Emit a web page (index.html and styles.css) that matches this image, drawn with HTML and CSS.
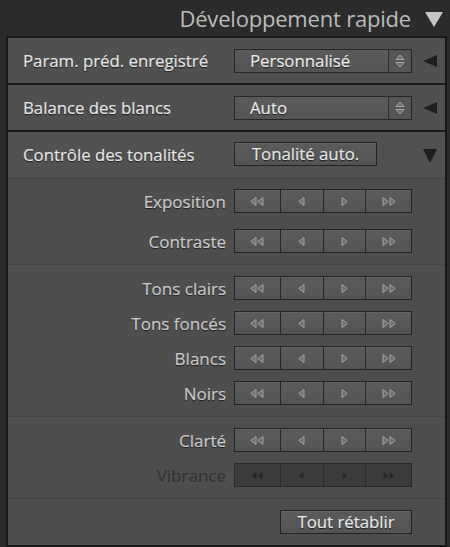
FILE: index.html
```html
<!DOCTYPE html>
<html lang="fr">
<head>
<meta charset="utf-8">
<title>Développement rapide</title>
<link rel="stylesheet" href="styles.css">
</head>
<body>
<div class="app">
  <div class="title-bar">
    <span class="title">Développement rapide</span>
    <svg class="title-tri" width="18" height="15" viewBox="0 0 18 15"><path d="M0 0 H18 L9 15 Z" fill="#c6c6c6"/></svg>
  </div>
  <div class="panel">
    <div class="head-row">
      <span class="head-label">Param. préd. enregistré</span>
      <div class="select">
        <span class="select-value">Personnalisé</span>
        <span class="stepper"><svg width="10" height="14" viewBox="0 0 10 14"><path d="M5 1 L9 5.5 H1 Z M5 13 L9 8.5 H1 Z" fill="#6e6e6e" stroke="#a8a8a8" stroke-width="1"/></svg></span>
      </div>
      <svg class="side-tri" width="14" height="12" viewBox="0 0 14 12"><path d="M14 0 V12 L0 6 Z" fill="#1e1e1e"/></svg>
    </div>
    <div class="head-row">
      <span class="head-label">Balance des blancs</span>
      <div class="select">
        <span class="select-value">Auto</span>
        <span class="stepper"><svg width="10" height="14" viewBox="0 0 10 14"><path d="M5 1 L9 5.5 H1 Z M5 13 L9 8.5 H1 Z" fill="#6e6e6e" stroke="#a8a8a8" stroke-width="1"/></svg></span>
      </div>
      <svg class="side-tri" width="14" height="12" viewBox="0 0 14 12"><path d="M14 0 V12 L0 6 Z" fill="#1e1e1e"/></svg>
    </div>
    <div class="head-row tone-row">
      <span class="head-label">Contrôle des tonalités</span>
      <button class="btn auto-btn">Tonalité auto.</button>
      <svg class="down-tri" width="14" height="14" viewBox="0 0 14 14"><path d="M0 0 H14 L7 14 Z" fill="#1e1e1e"/></svg>
    </div>

    <div class="section section-basic">
      <div class="slider-row"><span class="s-label">Exposition</span><div class="seg"><span class="cell"><svg width="14" height="9" viewBox="0 0 14 9"><path d="M6 0.5 V8.5 L0.8 4.5 Z M13 0.5 V8.5 L7.8 4.5 Z"/></svg></span><span class="cell mid"><svg width="7" height="9" viewBox="0 0 7 9"><path d="M6 0.5 V8.5 L0.8 4.5 Z"/></svg></span><span class="cell mid"><svg width="7" height="9" viewBox="0 0 7 9"><path d="M1 0.5 V8.5 L6.2 4.5 Z"/></svg></span><span class="cell"><svg width="14" height="9" viewBox="0 0 14 9"><path d="M1 0.5 V8.5 L6.2 4.5 Z M8 0.5 V8.5 L13.2 4.5 Z"/></svg></span></div></div>
      <div class="slider-row"><span class="s-label">Contraste</span><div class="seg"><span class="cell"><svg width="14" height="9" viewBox="0 0 14 9"><path d="M6 0.5 V8.5 L0.8 4.5 Z M13 0.5 V8.5 L7.8 4.5 Z"/></svg></span><span class="cell mid"><svg width="7" height="9" viewBox="0 0 7 9"><path d="M6 0.5 V8.5 L0.8 4.5 Z"/></svg></span><span class="cell mid"><svg width="7" height="9" viewBox="0 0 7 9"><path d="M1 0.5 V8.5 L6.2 4.5 Z"/></svg></span><span class="cell"><svg width="14" height="9" viewBox="0 0 14 9"><path d="M1 0.5 V8.5 L6.2 4.5 Z M8 0.5 V8.5 L13.2 4.5 Z"/></svg></span></div></div>
    </div>

    <div class="section section-tones">
      <div class="slider-row"><span class="s-label">Tons clairs</span><div class="seg"><span class="cell"><svg width="14" height="9" viewBox="0 0 14 9"><path d="M6 0.5 V8.5 L0.8 4.5 Z M13 0.5 V8.5 L7.8 4.5 Z"/></svg></span><span class="cell mid"><svg width="7" height="9" viewBox="0 0 7 9"><path d="M6 0.5 V8.5 L0.8 4.5 Z"/></svg></span><span class="cell mid"><svg width="7" height="9" viewBox="0 0 7 9"><path d="M1 0.5 V8.5 L6.2 4.5 Z"/></svg></span><span class="cell"><svg width="14" height="9" viewBox="0 0 14 9"><path d="M1 0.5 V8.5 L6.2 4.5 Z M8 0.5 V8.5 L13.2 4.5 Z"/></svg></span></div></div>
      <div class="slider-row"><span class="s-label">Tons foncés</span><div class="seg"><span class="cell"><svg width="14" height="9" viewBox="0 0 14 9"><path d="M6 0.5 V8.5 L0.8 4.5 Z M13 0.5 V8.5 L7.8 4.5 Z"/></svg></span><span class="cell mid"><svg width="7" height="9" viewBox="0 0 7 9"><path d="M6 0.5 V8.5 L0.8 4.5 Z"/></svg></span><span class="cell mid"><svg width="7" height="9" viewBox="0 0 7 9"><path d="M1 0.5 V8.5 L6.2 4.5 Z"/></svg></span><span class="cell"><svg width="14" height="9" viewBox="0 0 14 9"><path d="M1 0.5 V8.5 L6.2 4.5 Z M8 0.5 V8.5 L13.2 4.5 Z"/></svg></span></div></div>
      <div class="slider-row"><span class="s-label">Blancs</span><div class="seg"><span class="cell"><svg width="14" height="9" viewBox="0 0 14 9"><path d="M6 0.5 V8.5 L0.8 4.5 Z M13 0.5 V8.5 L7.8 4.5 Z"/></svg></span><span class="cell mid"><svg width="7" height="9" viewBox="0 0 7 9"><path d="M6 0.5 V8.5 L0.8 4.5 Z"/></svg></span><span class="cell mid"><svg width="7" height="9" viewBox="0 0 7 9"><path d="M1 0.5 V8.5 L6.2 4.5 Z"/></svg></span><span class="cell"><svg width="14" height="9" viewBox="0 0 14 9"><path d="M1 0.5 V8.5 L6.2 4.5 Z M8 0.5 V8.5 L13.2 4.5 Z"/></svg></span></div></div>
      <div class="slider-row"><span class="s-label">Noirs</span><div class="seg"><span class="cell"><svg width="14" height="9" viewBox="0 0 14 9"><path d="M6 0.5 V8.5 L0.8 4.5 Z M13 0.5 V8.5 L7.8 4.5 Z"/></svg></span><span class="cell mid"><svg width="7" height="9" viewBox="0 0 7 9"><path d="M6 0.5 V8.5 L0.8 4.5 Z"/></svg></span><span class="cell mid"><svg width="7" height="9" viewBox="0 0 7 9"><path d="M1 0.5 V8.5 L6.2 4.5 Z"/></svg></span><span class="cell"><svg width="14" height="9" viewBox="0 0 14 9"><path d="M1 0.5 V8.5 L6.2 4.5 Z M8 0.5 V8.5 L13.2 4.5 Z"/></svg></span></div></div>
    </div>

    <div class="section section-presence">
      <div class="slider-row"><span class="s-label">Clarté</span><div class="seg"><span class="cell"><svg width="14" height="9" viewBox="0 0 14 9"><path d="M6 0.5 V8.5 L0.8 4.5 Z M13 0.5 V8.5 L7.8 4.5 Z"/></svg></span><span class="cell mid"><svg width="7" height="9" viewBox="0 0 7 9"><path d="M6 0.5 V8.5 L0.8 4.5 Z"/></svg></span><span class="cell mid"><svg width="7" height="9" viewBox="0 0 7 9"><path d="M1 0.5 V8.5 L6.2 4.5 Z"/></svg></span><span class="cell"><svg width="14" height="9" viewBox="0 0 14 9"><path d="M1 0.5 V8.5 L6.2 4.5 Z M8 0.5 V8.5 L13.2 4.5 Z"/></svg></span></div></div>
      <div class="slider-row disabled"><span class="s-label">Vibrance</span><div class="seg"><span class="cell"><svg width="14" height="9" viewBox="0 0 14 9"><path d="M6 1.5 V7.5 L2 4.5 Z M12 1.5 V7.5 L8 4.5 Z"/></svg></span><span class="cell mid"><svg width="7" height="9" viewBox="0 0 7 9"><path d="M5 1.5 V7.5 L1 4.5 Z"/></svg></span><span class="cell mid"><svg width="7" height="9" viewBox="0 0 7 9"><path d="M2 1.5 V7.5 L6 4.5 Z"/></svg></span><span class="cell"><svg width="14" height="9" viewBox="0 0 14 9"><path d="M2 1.5 V7.5 L6 4.5 Z M8 1.5 V7.5 L12 4.5 Z"/></svg></span></div></div>
    </div>

    <div class="footer">
      <button class="btn reset-btn">Tout rétablir</button>
    </div>
  </div>
</div>
</body>
</html>
```
FILE: styles.css
```css
html, body {
  margin: 0;
  padding: 0;
  background: #2b2b2b;
}
body {
  width: 450px;
  height: 547px;
  overflow: hidden;
  font-family: "Open Sans", "DejaVu Sans", sans-serif;
}
.app {
  display: flex;
  flex-direction: column;
}
.title-bar {
  height: 36px;
  display: flex;
  align-items: center;
  justify-content: flex-end;
  gap: 14px;
  padding-right: 7px;
  box-sizing: border-box;
}
.title {
  font-size: 22px;
  color: #bcbcbc;
  letter-spacing: -0.2px;
}
.title-tri {
  margin-top: 2px;
}
.panel {
  margin-left: 6px;
  width: 441px;
  height: 511px;
  box-sizing: border-box;
  border: 2px solid #171717;
  background: #4e4e4e;
  display: flex;
  flex-direction: column;
}
.head-row {
  height: 47px;
  box-sizing: border-box;
  border-bottom: 2px solid #1a1a1a;
  display: flex;
  align-items: center;
  padding-left: 15px;
  background: #505050;
}
.tone-row {
  height: 47px;
  border-bottom: 1px solid #444444;
  background: #515151;
  padding-bottom: 2px;
}
.head-label {
  width: 211px;
  font-size: 16.8px;
  color: #e6e6e6;
  -webkit-text-stroke: 0.2px #e6e6e6;
  text-shadow: 0 1px 1px #1a1a1a;
}
.select {
  width: 178px;
  height: 24px;
  box-sizing: border-box;
  border: 1px solid #262626;
  background: linear-gradient(#5a5a5a, #545454);
  display: flex;
  align-items: stretch;
}
.select-value {
  flex: 1;
  padding-left: 15px;
  font-size: 16.8px;
  line-height: 22px;
  color: #ececec;
  -webkit-text-stroke: 0.2px #ececec;
  text-shadow: 0 1px 1px #1a1a1a;
}
.stepper {
  width: 22px;
  border-left: 1px solid #2c2c2c;
  display: flex;
  align-items: center;
  justify-content: center;
  background: #555555;
}
.side-tri {
  margin-left: 11px;
}
.down-tri {
  margin-left: 46px;
  margin-top: 4px;
}
.btn {
  height: 24px;
  box-sizing: border-box;
  border: 1px solid #222222;
  background: linear-gradient(#5b5b5b, #545454);
  box-shadow: inset 0 1px 0 #666666;
  color: #e8e8e8;
  font-family: "Open Sans", "DejaVu Sans", sans-serif;
  font-size: 16.8px;
  line-height: 20px;
  padding: 0;
  -webkit-text-stroke: 0.2px #e8e8e8;
  text-shadow: 0 1px 1px #1a1a1a;
}
.auto-btn {
  width: 143px;
}
.section {
  display: flex;
  flex-direction: column;
  gap: 11px;
  padding: 11px 33px 11px 0;
  border-bottom: 1px solid #444444;
}
.section-basic {
  gap: 16px;
  padding-top: 10px;
}
.section-tones {
  padding-top: 11px;
}
.slider-row {
  height: 24px;
  display: flex;
  align-items: center;
  justify-content: flex-end;
  gap: 8px;
}
.s-label {
  font-size: 17px;
  color: #cacaca;
  -webkit-text-stroke: 0.2px #cacaca;
  text-shadow: 0 1px 1px #1c1c1c;
}
.seg {
  width: 178px;
  height: 24px;
  box-sizing: border-box;
  border: 1px solid #232323;
  display: flex;
  background: #555555;
}
.cell {
  width: 46px;
  display: flex;
  align-items: center;
  justify-content: center;
  background: linear-gradient(#5b5b5b, #545454);
  box-shadow: inset 0 1px 0 #646464;
}
.cell.mid {
  width: 43px;
}
.cell + .cell {
  border-left: 1px solid #272727;
}
.cell svg path {
  fill: #6e6e6e;
  stroke: #a4a4a4;
  stroke-width: 1;
  stroke-linejoin: round;
}
.disabled .s-label {
  color: #333333;
  -webkit-text-stroke: 0.2px #333333;
  text-shadow: 0 1px 0 #575757;
}
.disabled .seg {
  border-color: #2a2a2a;
}
.disabled .cell {
  background: #3b3b3b;
  box-shadow: none;
}
.disabled .cell + .cell {
  border-left-color: #2a2a2a;
}
.disabled .cell svg path {
  fill: #262626;
  stroke: #2a2a2a;
}
.footer {
  flex: 1;
  display: flex;
  justify-content: flex-end;
  align-items: flex-start;
  padding: 11px 33px 0 0;
}
.reset-btn {
  width: 132px;
}
```
